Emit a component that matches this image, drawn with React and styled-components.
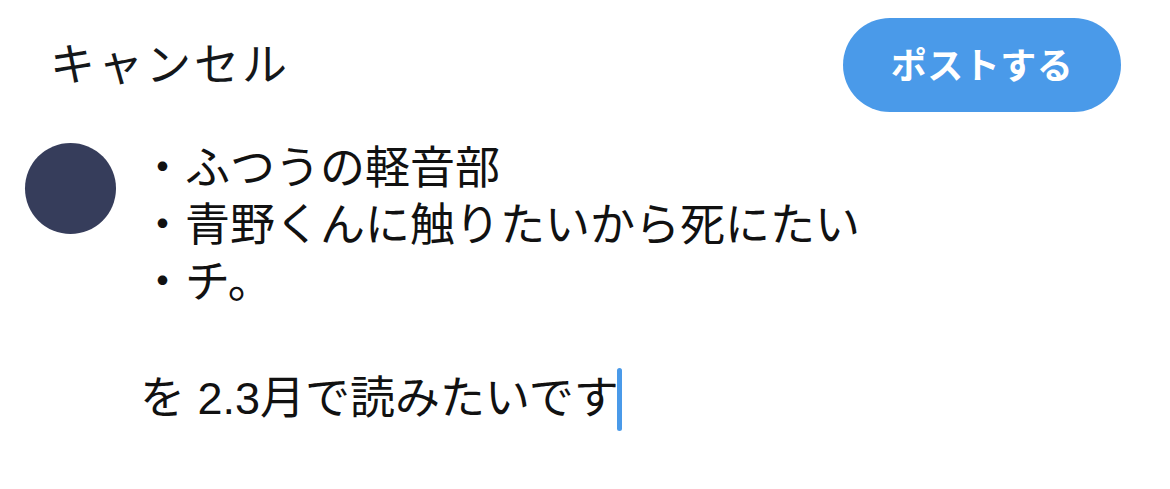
import React from "react";
import styled, { createGlobalStyle } from "styled-components";

const Global = createGlobalStyle`
  html, body { margin: 0; padding: 0; background: #ffffff; }
  body { font-family: "Noto Sans CJK JP", "Noto Sans", sans-serif; color: #111111; }
`;

const Page = styled.div`
  width: 1170px;
  height: 489px;
  background: #ffffff;
  display: flex;
  flex-direction: column;
  overflow: hidden;
`;

const Header = styled.div`
  display: flex;
  align-items: center;
  justify-content: space-between;
  padding: 18px 49px 0 50px;
  height: 94px;
`;

const Cancel = styled.div`
  font-size: 45px;
  line-height: 1;
  letter-spacing: 3px;
  color: #14171a;
  margin-bottom: 8px;
`;

const PostButton = styled.button`
  width: 278px;
  height: 94px;
  border: none;
  border-radius: 47px;
  background: #4a9ae9;
  color: #ffffff;
  font-family: "Noto Sans CJK JP", sans-serif;
  font-weight: 700;
  font-size: 36px;
  letter-spacing: 0.5px;
  display: flex;
  align-items: center;
  justify-content: center;
  padding: 0 0 4px 0;
`;

const Body = styled.div`
  display: flex;
  padding: 31px 0 0 25px;
  gap: 24px;
`;

const Avatar = styled.div`
  width: 91px;
  height: 91px;
  border-radius: 50%;
  background: #363d5b;
  flex: none;
`;

const Text = styled.div`
  margin-top: -3px;
  font-family: "Liberation Sans", "Noto Sans CJK JP", sans-serif;
  font-size: 45px;
  line-height: 57px;
  color: #111111;
`;

const Line = styled.div`
  min-height: 57px;
  white-space: pre;
`;

const Caret = styled.span`
  display: inline-block;
  width: 5px;
  height: 63px;
  border-radius: 3px;
  background: #4a9ae9;
  vertical-align: -17px;
  margin-left: -2px;
`;

export default function App() {
  return (
    <Page>
      <Global />
      <Header>
        <Cancel>キャンセル</Cancel>
        <PostButton>ポストする</PostButton>
      </Header>
      <Body>
        <Avatar />
        <Text>
          <Line>・ふつうの軽音部</Line>
          <Line>・青野くんに触りたいから死にたい</Line>
          <Line>・チ。</Line>
          <Line></Line>
          <Line>
            を 2.3月で読みたいです<Caret />
          </Line>
        </Text>
      </Body>
    </Page>
  );
}
